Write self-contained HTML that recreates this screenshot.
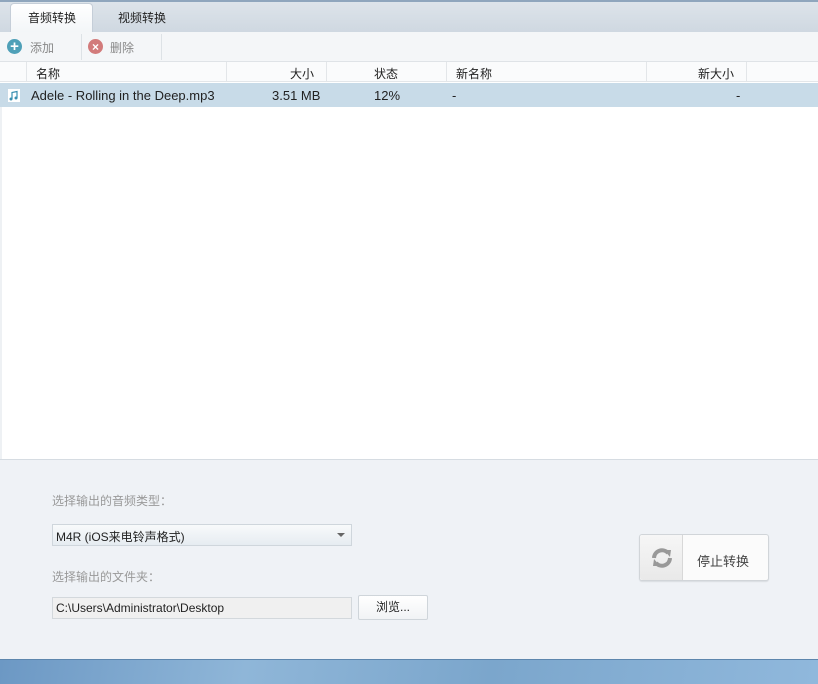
<!DOCTYPE html><html><head><meta charset="utf-8"><style>
*{margin:0;padding:0;box-sizing:border-box}
body{width:818px;height:684px;overflow:hidden;font-family:"Liberation Sans","Noto Sans CJK SC",sans-serif;font-size:12px;color:#222;background:#fff;position:relative}
.a{position:absolute}
.ic{position:absolute;width:15px;height:15px;border-radius:50%;color:#fff;font-weight:bold;display:flex;align-items:center;justify-content:center}
</style></head><body>
<div class="a" style="left:0;top:0;width:818px;height:2px;background:#8fa6bd"></div>
<div class="a" style="left:0;top:2px;width:818px;height:30px;background:linear-gradient(#dde4ea,#cfd8e1)"></div>
<div class="a" style="left:10px;top:3px;width:83px;height:29px;background:linear-gradient(#fff,#f3f6f8);border-radius:4px 4px 0 0;border:1px solid #c5ced8;border-bottom:none"></div>
<div class="a" style="left:28px;top:9px;font-size:12px">音频转换</div>
<div class="a" style="left:118px;top:9px;font-size:12px">视频转换</div>
<div class="a" style="left:0;top:32px;width:818px;height:30px;background:#f4f6f8;border-bottom:1px solid #dfe3e7"></div>
<div class="a" style="left:81px;top:34px;width:1px;height:26px;background:#dde2e6"></div>
<div class="a" style="left:161px;top:34px;width:1px;height:26px;background:#dde2e6"></div>
<div class="ic" style="left:7px;top:39px;background:#4fa0b8;font-size:15px">+</div>
<div class="a" style="left:30px;top:39px;color:#888">添加</div>
<div class="ic" style="left:88px;top:39px;background:#d27b7b;font-size:12px">×</div>
<div class="a" style="left:110px;top:39px;color:#888">删除</div>
<div class="a" style="left:0;top:62px;width:818px;height:20px;background:#fafbfc;border-bottom:1px solid #e3e6e9"></div>
<div class="a" style="left:26px;top:62px;width:1px;height:20px;background:#e3e6e9"></div>
<div class="a" style="left:226px;top:62px;width:1px;height:20px;background:#e3e6e9"></div>
<div class="a" style="left:326px;top:62px;width:1px;height:20px;background:#e3e6e9"></div>
<div class="a" style="left:446px;top:62px;width:1px;height:20px;background:#e3e6e9"></div>
<div class="a" style="left:646px;top:62px;width:1px;height:20px;background:#e3e6e9"></div>
<div class="a" style="left:746px;top:62px;width:1px;height:20px;background:#e3e6e9"></div>
<div class="a" style="left:36px;top:65px">名称</div>
<div class="a" style="left:290px;top:65px">大小</div>
<div class="a" style="left:374px;top:65px">状态</div>
<div class="a" style="left:456px;top:65px">新名称</div>
<div class="a" style="left:698px;top:65px">新大小</div>
<div class="a" style="left:0;top:83px;width:818px;height:24px;background:#c8dbe8"></div>
<svg class="a" style="left:8px;top:89px" width="12" height="13" viewBox="0 0 12 13"><rect width="12" height="13" fill="#fff"/><path d="M4 10V3.5L9 2.5V9" stroke="#3a8fb0" stroke-width="1.2" fill="none"/><circle cx="3" cy="10" r="1.5" fill="#3a8fb0"/><circle cx="8" cy="9" r="1.5" fill="#3a8fb0"/></svg>
<div class="a" style="left:31px;top:88px;font-size:13px">Adele - Rolling in the Deep.mp3</div>
<div class="a" style="left:272px;top:88px;font-size:13px">3.51 MB</div>
<div class="a" style="left:374px;top:88px;font-size:13px">12%</div>
<div class="a" style="left:452px;top:88px;font-size:13px">-</div>
<div class="a" style="left:736px;top:88px;font-size:13px">-</div>
<div class="a" style="left:0;top:107px;width:2px;height:352px;background:#eef1f4"></div>
<div class="a" style="left:0;top:459px;width:818px;height:200px;background:#eff2f6;border-top:1px solid #d6dce2"></div>
<div class="a" style="left:52px;top:492px;color:#999">选择输出的音频类型：</div>
<div class="a" style="left:52px;top:524px;width:300px;height:22px;background:linear-gradient(#f8fafb,#e6ecf1);border:1px solid #cfd6dc;padding:3px 3px;font-size:12px">M4R (iOS来电铃声格式)<span style="position:absolute;right:6px;top:8px;border:4px solid transparent;border-top:4px solid #666"></span></div>
<div class="a" style="left:52px;top:568px;color:#999">选择输出的文件夹：</div>
<div class="a" style="left:52px;top:597px;width:300px;height:22px;background:#f0f0f0;border:1px solid #d3d8dc;padding:3px 3px;font-size:12px">C:\Users\Administrator\Desktop</div>
<div class="a" style="left:358px;top:595px;width:70px;height:25px;background:linear-gradient(#fff,#f1f3f5);border:1px solid #cfd5da;border-radius:2px;text-align:center;line-height:23px">浏览...</div>
<div class="a" style="left:639px;top:534px;width:130px;height:47px;background:#fbfbfb;border:1px solid #d1d5d9;border-radius:3px;box-shadow:0 1px 1px #d8dce0"></div>
<div class="a" style="left:640px;top:535px;width:43px;height:45px;background:linear-gradient(#f6f6f6,#e9e9e9);border-right:1px solid #d8d8d8;border-radius:3px 0 0 3px"></div>
<svg class="a" style="left:650px;top:546px" width="24" height="24" viewBox="0 0 24 24"><path d="M4 12a8 8 0 0 1 14-5" stroke="#999" stroke-width="4" fill="none"/><path d="M20 12a8 8 0 0 1-14 5" stroke="#999" stroke-width="4" fill="none"/><path d="M14 4l7 0 -1 7z" fill="#999"/><path d="M10 20l-7 0 1-7z" fill="#999"/></svg>
<div class="a" style="left:697px;top:551px;font-size:13px;color:#444">停止转换</div>
<div class="a" style="left:0;top:659px;width:818px;height:25px;background:linear-gradient(100deg,#6c98c4,#8fb6d8 30%,#7ba6cc 60%,#90b8dc);border-top:1px solid #5d86ad"></div>
</body></html>
